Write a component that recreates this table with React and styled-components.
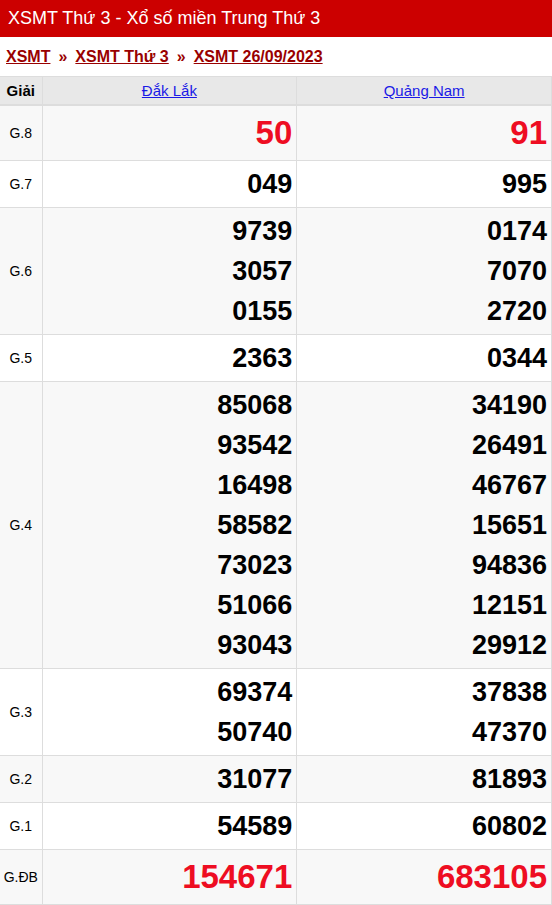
import React from "react";
import styled, { createGlobalStyle } from "styled-components";

const GlobalStyle = createGlobalStyle`
  body {
    margin: 0;
    background: #fff;
    font-family: "Liberation Sans", Arial, sans-serif;
  }
`;

const provinces = ["Đắk Lắk", "Quảng Nam"];

const prizes = [
  { label: "G.8", big: true, values: [["50"], ["91"]] },
  { label: "G.7", values: [["049"], ["995"]] },
  { label: "G.6", values: [["9739", "3057", "0155"], ["0174", "7070", "2720"]] },
  { label: "G.5", values: [["2363"], ["0344"]] },
  {
    label: "G.4",
    values: [
      ["85068", "93542", "16498", "58582", "73023", "51066", "93043"],
      ["34190", "26491", "46767", "15651", "94836", "12151", "29912"],
    ],
  },
  { label: "G.3", values: [["69374", "50740"], ["37838", "47370"]] },
  { label: "G.2", values: [["31077"], ["81893"]] },
  { label: "G.1", values: [["54589"], ["60802"]] },
  { label: "G.ĐB", big: true, values: [["154671"], ["683105"]] },
];

const App = () => {
  return (
    <>
      <GlobalStyle />
      <Page>
        <TitleBar>XSMT Thứ 3 - Xổ số miền Trung Thứ 3</TitleBar>
        <Crumbs>
          <Crumb href="#">XSMT</Crumb>
          <Sep>»</Sep>
          <Crumb href="#">XSMT Thứ 3</Crumb>
          <Sep>»</Sep>
          <Crumb href="#">XSMT 26/09/2023</Crumb>
        </Crumbs>
        <Table>
          <colgroup>
            <col style={{ width: 42 }} />
            <col />
            <col />
          </colgroup>
          <thead>
            <tr>
              <HeadCell>Giải</HeadCell>
              {provinces.map((p) => (
                <HeadCell key={p}>
                  <ProvinceLink href="#">{p}</ProvinceLink>
                </HeadCell>
              ))}
            </tr>
          </thead>
          <tbody>
            {prizes.map((row, i) => (
              <Row key={row.label} odd={i % 2 === 0}>
                <Label>{row.label}</Label>
                {row.values.map((nums, j) => (
                  <NumCell key={j}>
                    {nums.map((n) => (
                      <Num key={n} big={row.big}>
                        {n}
                      </Num>
                    ))}
                  </NumCell>
                ))}
              </Row>
            ))}
          </tbody>
        </Table>
      </Page>
    </>
  );
};

export default App;

const Page = styled.div`
  width: 552px;
`;

const TitleBar = styled.h1`
  margin: 0;
  height: 37px;
  line-height: 36px;
  padding: 0 8px;
  background: #cc0000;
  color: #fff;
  font-size: 18px;
  font-weight: normal;
`;

const Crumbs = styled.div`
  display: flex;
  align-items: center;
  gap: 8px;
  height: 39px;
  padding: 0 6px;
  font-size: 16px;
  font-weight: bold;
`;

const Crumb = styled.a`
  color: #990000;
  text-decoration: underline;
`;

const Sep = styled.span`
  color: #990000;
`;

const Table = styled.table`
  width: 100%;
  border-collapse: collapse;
  table-layout: fixed;
`;

const HeadCell = styled.th`
  height: 27px;
  padding: 0;
  background: #e8e8e8;
  border: 1px solid #dddddd;
  border-bottom-width: 2px;
  font-size: 15px;
  font-weight: bold;
  color: #000;
  text-align: center;

  &:first-child {
    border-left: 0;
  }
`;

const ProvinceLink = styled.a`
  color: #1a1ae6;
  font-weight: normal;
  text-decoration: underline;
`;

const Row = styled.tr`
  background: ${(props) => (props.odd ? "#f8f8f8" : "#ffffff")};
`;

const Label = styled.td`
  border: 1px solid #dddddd;
  border-left: 0;
  text-align: center;
  font-size: 14px;
  color: #000;
  padding: 0;
`;

const NumCell = styled.td`
  border: 1px solid #dddddd;
  padding: 3px 4px;
  text-align: right;
`;

const Num = styled.div`
  font-weight: bold;
  font-size: ${(props) => (props.big ? "33px" : "27px")};
  line-height: ${(props) => (props.big ? "48px" : "40px")};
  color: ${(props) => (props.big ? "#ee0d22" : "#000")};
`;
